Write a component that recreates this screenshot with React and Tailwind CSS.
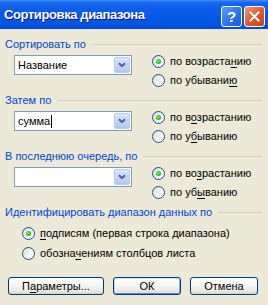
import React from 'react';

const font = { fontFamily: '"Liberation Sans", Arial, sans-serif' };

const U = ({ children }) => <span className="underline underline-offset-[2px]">{children}</span>;

const Radio = ({ checked, children }) => (
  <div className="flex items-center gap-[5px] h-[19px] text-[11px] text-black">
    <span className="relative w-[13px] h-[13px] rounded-full border border-[#1C5180] bg-[linear-gradient(135deg,#DCDCD7_0%,#F4F4F2_60%,#FFFFFF_100%)] flex items-center justify-center shrink-0">
      {checked && (
        <span className="w-[5px] h-[5px] rounded-full bg-[radial-gradient(circle_at_40%_40%,#8CE58C_0%,#2DB22D_60%,#1C8A1C_100%)]" />
      )}
    </span>
    <span className="leading-none whitespace-nowrap">{children}</span>
  </div>
);

const Combo = ({ value, caret }) => (
  <div className="w-[118px] h-[20px] border border-[#7F9DB9] bg-white flex items-center">
    <div className="flex-1 pl-[3px] text-[11px] text-black flex items-center leading-none">
      {value}
      {caret && <span className="inline-block w-px h-[13px] bg-black ml-px" />}
    </div>
    <div className="w-[16px] h-[16px] mr-px rounded-[2px] border border-[#B9CCF8] bg-[linear-gradient(to_bottom,#DCE7FE_0%,#C4D5FC_50%,#B4C8F6_100%)] flex items-center justify-center">
      <svg width="8" height="6" viewBox="0 0 8 6">
        <path d="M1 1.2 L4 4.2 L7 1.2" fill="none" stroke="#4D6185" strokeWidth="2" />
      </svg>
    </div>
  </div>
);

const Header = ({ children }) => (
  <div className="flex items-center h-4 gap-[6px]">
    <span className="text-[11px] text-[#0046D5] leading-none whitespace-nowrap">{children}</span>
    <span className="flex-1 h-px bg-[#D0D0BF] mt-px" />
  </div>
);

const SortSection = ({ title, value, caret, up, down }) => (
  <div>
    <Header>{title}</Header>
    <div className="flex">
      <div className="pl-[9px] pt-[3px]">
        <Combo value={value} caret={caret} />
      </div>
      <div className="ml-[20px] flex flex-col">
        <Radio checked>{up}</Radio>
        <Radio>{down}</Radio>
      </div>
    </div>
  </div>
);

const Button = ({ children, w, def }) => (
  <button
    className={`${w} h-[18px] rounded-[3px] border border-[#003C74] bg-[linear-gradient(to_bottom,#FFFFFF_0%,#F4F4F0_50%,#E8E6DE_85%,#D6D0C5_100%)] text-[11px] text-black leading-none flex items-center justify-center ${
      def ? 'shadow-[inset_0_1px_0_#CEE7FF,inset_1px_0_0_#BCD4F6,inset_-1px_0_0_#89ADE4,inset_0_-1px_0_#6982EE]' : ''
    }`}
  >
    {children}
  </button>
);

export default function App() {
  return (
    <div className="w-[268px] h-[305px] bg-[#ECE9D8] overflow-hidden" style={font}>
      {/* Title bar */}
      <div className="h-[29px] flex items-center pl-[4px] pr-[3px] bg-[linear-gradient(to_bottom,#3D8DF9_0%,#1465EE_10%,#0A5CE8_40%,#0056E4_80%,#004AD6_100%)]">
        <span className="flex-1 text-[13px] font-bold text-white leading-none [text-shadow:1px_1px_0_#0A1883] tracking-[-0.4px]">
          Сортировка диапазона
        </span>
        <div className="flex gap-[2px] mt-[3px]">
          <div className="w-[21px] h-[21px] rounded-[3px] border border-white bg-[linear-gradient(135deg,#5B9BFF_0%,#2D6FEA_60%,#2359D6_100%)] flex items-center justify-center text-white font-bold text-[15px] leading-none">
            ?
          </div>
          <div className="w-[21px] h-[21px] rounded-[3px] border border-white bg-[linear-gradient(135deg,#F19A7A_0%,#E0582E_50%,#C8411A_100%)] flex items-center justify-center">
            <svg width="11" height="11" viewBox="0 0 11 11">
              <path d="M1.5 1.5 L9.5 9.5 M9.5 1.5 L1.5 9.5" stroke="white" strokeWidth="2" strokeLinecap="square" />
            </svg>
          </div>
        </div>
      </div>

      {/* Body */}
      <div className="pl-[5px] pr-[6px] pt-[7px]">
        <div className="flex flex-col gap-[2px]">
          <SortSection
            title="Сортировать по"
            value="Название"
            up={<>по возраста<U>н</U>ию</>}
            down={<>по убывани<U>ю</U></>}
          />
          <SortSection
            title="Затем по"
            value="сумма"
            caret
            up={<>по в<U>о</U>зрастанию</>}
            down={<>по у<U>б</U>ыванию</>}
          />
          <SortSection
            title="В последнюю очередь, по"
            value=""
            up={<>по во<U>з</U>растанию</>}
            down={<>по уб<U>ы</U>ванию</>}
          />
        </div>

        <div className="mt-[2px]">
          <Header>Идентифицировать диапазон данных по</Header>
          <div className="pl-[17px] pt-[4px] flex flex-col gap-px">
            <Radio checked><U>п</U>одписям (первая строка диапазона)</Radio>
            <Radio>обозна<U>ч</U>ениям столбцов листа</Radio>
          </div>
        </div>

        <div className="flex mt-[14px] pl-[3px] gap-[9px]">
          <Button w="w-[96px]">П<U>а</U>раметры...</Button>
          <Button w="w-[68px]" def>ОК</Button>
          <Button w="w-[68px]">Отмена</Button>
        </div>
      </div>
    </div>
  );
}
